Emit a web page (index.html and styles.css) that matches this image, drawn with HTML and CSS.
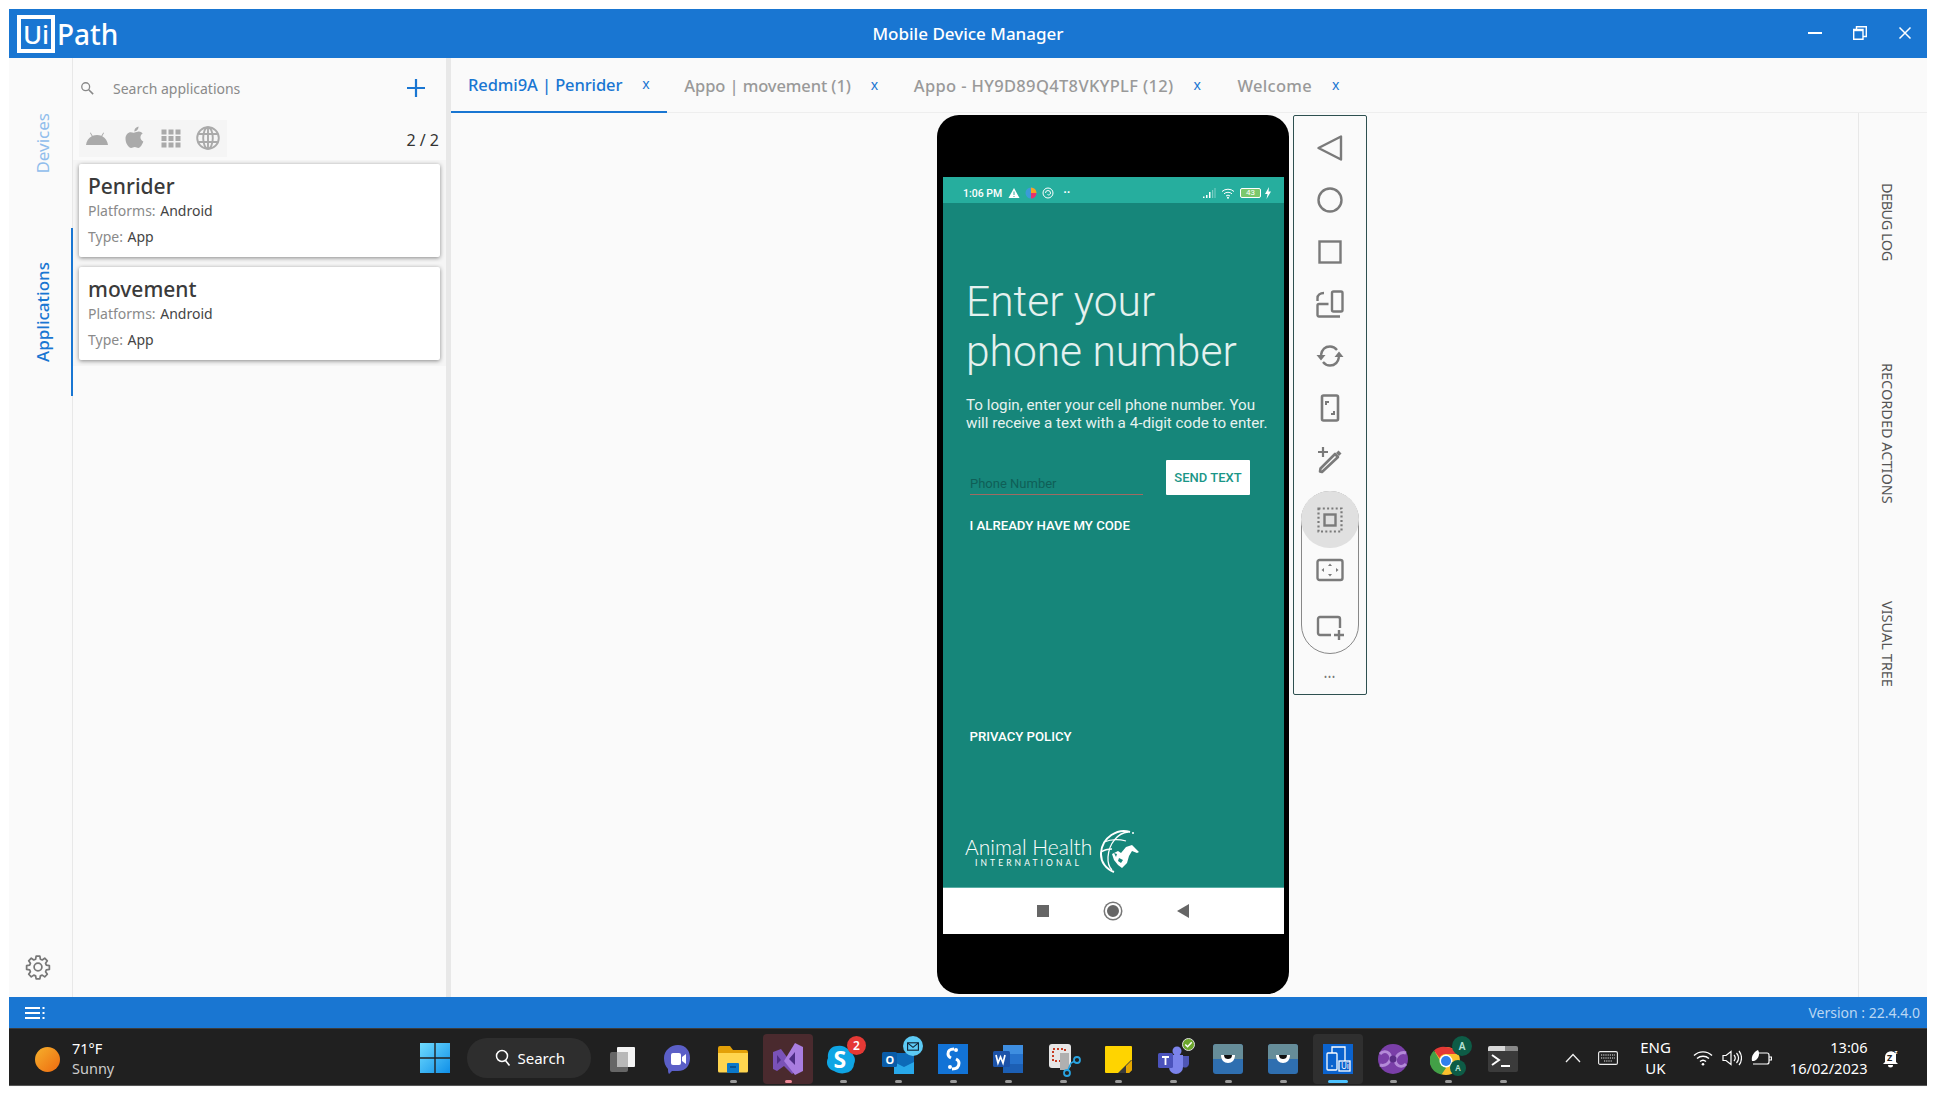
FILE: index.html
```html
<!DOCTYPE html>
<html>
  <head>
    <title>Mobile Device Manager</title>
    <link rel="stylesheet" href="styles.css">
  </head>
  <body>
    <div class="window">
      <header class="titlebar">
        <div class="logo"><span class="logo-box">Ui</span><span class="logo-path">Path</span></div>
        <div class="title">Mobile Device Manager</div>
        <div class="win-controls">
          <svg viewBox="0 0 14 14" class="win-btn"><path d="M0 7h14" stroke="#fff" stroke-width="2"/></svg>
          <svg viewBox="0 0 14 14" class="win-btn"><path d="M3.5 3V.7h9.800v9.800H10M.7 3.500h9.300v9.800H.7z" fill="none" stroke="#fff" stroke-width="1.400"/><path d="M.7 4.500h9.300" stroke="#fff" stroke-width="1.400"/></svg>
          <svg viewBox="0 0 14 14" class="win-btn"><path d="M1.500 1.500l11 11M12.500 1.500l-11 11" stroke="#fff" stroke-width="1.500"/></svg>
        </div>
      </header>

      <div class="content">
        <nav class="sidenav">
          <div class="nav-item nav-devices"><span class="vtext">Devices</span></div>
          <div class="nav-item nav-apps"><span class="vtext">Applications</span></div>
          <svg class="gear" viewBox="0 0 24 24"><path d="M10.300 2h3.400l.5 2.800 1.700.7 2.300-1.600 2.400 2.400-1.600 2.300.7 1.700 2.800.5v3.400l-2.800.5-.7 1.700 1.600 2.300-2.400 2.400-2.300-1.600-1.700.7-.5 2.800h-3.400l-.5-2.800-1.700-.7-2.300 1.600-2.400-2.400 1.600-2.300-.7-1.700-2.800-.5v-3.400l2.800-.5.700-1.700-1.600-2.300 2.400-2.400 2.300 1.600 1.700-.7z" fill="none" stroke="#777" stroke-width="1.600" stroke-linejoin="round"/><circle cx="12" cy="12" r="3.600" fill="none" stroke="#777" stroke-width="1.600"/></svg>
        </nav>

        <aside class="panel">
          <div class="search-row">
            <svg class="search-icon" viewBox="0 0 16 16"><circle cx="6.500" cy="6.500" r="4.500" fill="none" stroke="#888" stroke-width="1.500"/><path d="M10 10l5 5" stroke="#888" stroke-width="1.800"/></svg>
            <span class="search-text">Search applications</span>
            <svg class="plus" viewBox="0 0 18 18"><path d="M9 0v18M0 9h18" stroke="#1976d2" stroke-width="2.200"/></svg>
          </div>
          <div class="filter-row">
            <div class="filters">
              <svg viewBox="0 0 24 24" class="filter"><path d="M1 19c.4-4.200 2.600-7.200 5.800-8.800L5 7l.7-.4 1.900 3.200A12 12 0 0 1 16.400 9.800L18.300 6.600l.7.4-1.800 3.200c3.200 1.600 5.400 4.600 5.800 8.800z" fill="#aaa"/></svg>
              <svg viewBox="0 0 24 24" class="filter"><path d="M12.500 6.500c1.300 0 2.700-1 4.300-1 1.500 0 3 .8 3.900 2.100-3.300 1.900-2.800 6.500.6 7.900-.8 2.400-2.900 6.500-5 6.500-1.300 0-2-.9-3.500-.9s-2.400.9-3.600.9C6.300 22 3.500 16.800 3.500 12.800c0-4.100 2.600-6.500 5.200-6.500 1.500 0 2.800.9 3.800.2zM12.300 5.500C12.200 3.200 14 1 16.500.5c.2 2.500-1.700 4.800-4.200 5z" fill="#aaa"/></svg>
              <svg viewBox="0 0 24 24" class="filter"><path d="M2.500 3.500h5v5h-5zM9.500 3.500h5v5h-5zM16.500 3.500h5v5h-5zM2.500 10h5v5h-5zM9.500 10h5v5h-5zM16.500 10h5v5h-5zM2.500 16.500h5v5h-5zM9.500 16.500h5v5h-5zM16.500 16.500h5v5h-5z" fill="#aaa"/></svg>
              <svg viewBox="0 0 24 24" class="filter"><g fill="none" stroke="#aaa" stroke-width="1.900"><circle cx="12" cy="12" r="10.800"/><ellipse cx="12" cy="12" rx="4.800" ry="10.800"/><path d="M12 1v22M2.200 8h19.600M2.200 16h19.600"/></g></svg>
            </div>
            <span class="count">2 / 2</span>
          </div>
          <div class="app-row">
            <div class="app-card">
              <div class="app-name">Penrider</div>
              <div class="app-meta"><span class="meta-key">Platforms:</span> Android</div>
              <div class="app-meta"><span class="meta-key">Type:</span> App</div>
            </div>
          </div>
          <div class="app-row">
            <div class="app-card">
              <div class="app-name">movement</div>
              <div class="app-meta"><span class="meta-key">Platforms:</span> Android</div>
              <div class="app-meta"><span class="meta-key">Type:</span> App</div>
            </div>
          </div>
        </aside>

        <main class="main">
          <div class="tabs">
            <div class="tab active"><span class="tab-label">Redmi9A | Penrider</span><span class="tab-close">x</span></div>
            <div class="tab tab-movement"><span class="tab-label">Appo | movement (1)</span><span class="tab-close">x</span></div>
            <div class="tab tab-serial"><span class="tab-label">Appo - HY9D89Q4T8VKYPLF (12)</span><span class="tab-close">x</span></div>
            <div class="tab tab-welcome"><span class="tab-label">Welcome</span><span class="tab-close">x</span></div>
          </div>
          <div class="workspace">
            <div class="stage">
              <div class="phone">
                <div class="screen">
                  <div class="statusbar">
                    <span class="clock">1:06 PM</span>
                    <svg viewBox="0 0 12 12" class="st-icon"><path d="M6 1l5.500 10H.5z" fill="#fff"/><path d="M6 4.500v3.500M6 9v1" stroke="#26ae9e"/></svg>
                    <svg viewBox="0 0 12 12" class="st-icon"><circle cx="6" cy="6" r="5.500" fill="#3b9bd8"/><path d="M6 .5A5.500 5.500 0 0 1 11.500 6H6z" fill="#f5a623"/><path d="M11.500 6A5.500 5.500 0 0 1 6 11.500V6z" fill="#e8336d"/></svg>
                    <svg viewBox="0 0 12 12" class="st-icon"><circle cx="6" cy="6" r="5" fill="none" stroke="#fff"/><path d="M3.500 6a2.500 2.500 0 0 1 5 0c0 1.800-2 2.500-3 1.500" fill="none" stroke="#fff"/></svg>
                    <span class="st-dots">··</span>
                    <span class="st-spacer"></span>
                    <svg viewBox="0 0 14 12" class="st-signal"><path d="M1 11h1.500V9.500H1zM4 11h1.500V8H4zM7 11h1.500V5H7z" fill="#fff"/><path d="M10 11h1.200V3H10zM12.500 11h1V1h-1z" fill="#fff" opacity=".4"/></svg>
                    <svg viewBox="0 0 14 12" class="st-signal"><g fill="none" stroke="#fff"><path d="M1 4.500a9 9 0 0 1 12 0M3 6.800a6 6 0 0 1 8 0M5 9a3 3 0 0 1 4 0"/></g><circle cx="7" cy="10.800" r="1" fill="#fff"/></svg>
                    <span class="battery">43</span>
                    <svg viewBox="0 0 6 12" class="st-bolt"><path d="M4 0L0 7h2.500L1.500 12 6 4.500H3.500z" fill="#fff"/></svg>
                  </div>
                  <div class="app-body">
                    <h1 class="headline">Enter your<br>phone number</h1>
                    <p class="intro">To login, enter your cell phone number. You<br>will receive a text with a 4-digit code to enter.</p>
                    <div class="phone-form">
                      <div class="phone-input">Phone Number</div>
                      <div class="send-btn">SEND TEXT</div>
                    </div>
                    <div class="link-code">I ALREADY HAVE MY CODE</div>
                    <div class="link-privacy">PRIVACY POLICY</div>
                    <div class="brand">
                      <div class="brand-text">
                        <div class="brand-name">Animal Health</div>
                        <div class="brand-sub">INTERNATIONAL</div>
                      </div>
                      <svg viewBox="0 0 42 44" class="brand-globe">
                        <g fill="none" stroke="#fff" stroke-width="1.300">
                          <path d="M32 3C20 -1 4 8 3 24c-.500 9 5 16 13 19" stroke-width="2"/>
                          <path d="M30 3C20 4 11 14 10 28c-.3 5 1 10 4 13"/>
                          <path d="M6 13c7-3 15-3 22-1M3 23c3-2 7-3 11-3"/>
                        </g>
                        <path d="M14 25l6-3 3 2 5-6 6-2 2 2 5 5-2 1-5-2-3 5-2 7-5 5-4-3-4-5z" fill="#fff"/>
                        <path d="M21 29l4 2-2 3-3-2zM16 24l3 1-1 3z" fill="#16867a"/>
                        <circle cx="35" cy="4" r="1" fill="#fff"/>
                      </svg>
                    </div>
                  </div>
                  <div class="android-nav">
                    <span class="nav-square"></span>
                    <span class="nav-circle"></span>
                    <svg viewBox="0 0 12 14" class="nav-back"><path d="M12 0v14L0 7z" fill="#666"/></svg>
                  </div>
                </div>
              </div>

              <div class="toolbar">
                <div class="tool"><svg viewBox="0 0 28 28"><path d="M2.500 14L25 2.500v23z" fill="none" stroke="#7a7a7a" stroke-width="2.400" stroke-linejoin="round"/></svg></div>
                <div class="tool"><svg viewBox="0 0 28 28"><circle cx="14" cy="14" r="11.500" fill="none" stroke="#7a7a7a" stroke-width="2.400"/></svg></div>
                <div class="tool"><svg viewBox="0 0 28 28"><rect x="3.500" y="3.500" width="21" height="21" fill="none" stroke="#7a7a7a" stroke-width="2.400"/></svg></div>
                <div class="tool"><svg viewBox="0 0 28 28"><g fill="none" stroke="#7a7a7a" stroke-width="2.400" stroke-linejoin="round"><rect x="16" y="1.500" width="10.500" height="20" rx="1.500"/><path d="M12.500 14H3a1.500 1.500 0 0 0-1.500 1.500V25A1.500 1.500 0 0 0 3 26.500h21M1.500 11V8C1.500 5 4 3 8 3"/></g></svg></div>
                <div class="tool"><svg viewBox="0 0 28 28"><path d="M5 13C6 7 10 4.500 14 4.500c3 0 5 1 7 3.500M23 15c-1 6-5 8.500-9 8.500-3 0-5-1-7-3.500" fill="none" stroke="#7a7a7a" stroke-width="2.400"/><path d="M.5 13h9L5 18.500zM27.500 15h-9L23 9.500z" fill="#7a7a7a"/></svg></div>
                <div class="tool"><svg viewBox="0 0 28 28"><g fill="none" stroke="#7a7a7a" stroke-width="2.600"><rect x="6" y="1.500" width="16" height="25" rx="1.500"/><path d="M13 8h-3v3M15 20h3v-3" stroke-width="2"/></g></svg></div>
                <div class="tool"><svg viewBox="0 0 28 28"><g fill="none" stroke="#7a7a7a" stroke-width="2.600" stroke-linejoin="round"><path d="M6 26l-2-.5.500-3L19 8l3 3z"/><path d="M7 1v10M2 6h10" stroke-width="2.200"/></g><path d="M20 7l2.500-2.500 3 3L23 10z" fill="#7a7a7a"/></svg></div>
                <div class="tool-pill">
                  <div class="pill-item selected"><svg viewBox="0 0 28 28"><g fill="none" stroke="#7a7a7a"><rect x="2.500" y="2.500" width="23" height="23" stroke-width="2.200" stroke-dasharray="2 2.300"/><rect x="8.500" y="8.500" width="11" height="11" stroke-width="2.400"/></g></svg></div>
                  <div class="pill-item item-region"><svg viewBox="0 0 28 28"><rect x="1.500" y="4" width="25" height="20" rx="2" fill="none" stroke="#7a7a7a" stroke-width="2.400"/><path d="M14 7.500l2 2.500h-4zM14 20.500l-2-2.500h4zM5.500 14l2.500-2v4zM22.500 14l-2.500 2v-4z" fill="#7a7a7a"/></svg></div>
                  <div class="pill-item"><svg viewBox="0 0 28 28"><g fill="none" stroke="#7a7a7a" stroke-width="2.400"><path d="M15 22H4a2 2 0 0 1-2-2V6a2 2 0 0 1 2-2h18a2 2 0 0 1 2 2v9"/><path d="M23 17v10M18 22h10"/></g></svg></div>
                </div>
                <div class="tool-more">•••</div>
              </div>
            </div>
            <aside class="rail">
              <span class="rail-label label-debug">DEBUG LOG</span>
              <span class="rail-label label-recorded">RECORDED ACTIONS</span>
              <span class="rail-label label-tree">VISUAL TREE</span>
            </aside>
          </div>
        </main>
      </div>

      <footer class="app-status">
        <svg viewBox="0 0 20 14" class="status-menu"><path d="M0 2h15M0 7h15M0 12h15" stroke="#fff" stroke-width="2"/><path d="M17.500 1h2v2h-2zM17.500 6h2v2h-2zM17.500 11h2v2h-2z" fill="#fff"/></svg>
        <span class="version">Version : 22.4.4.0</span>
      </footer>

      <div class="taskbar">
        <div class="weather">
          <span class="sun"></span>
          <div class="weather-text"><div>71°F</div><div class="weather-sub">Sunny</div></div>
        </div>
        <svg viewBox="0 0 30 30" class="start">
          <defs><linearGradient id="winblue" x1="0" y1="0" x2="1" y2="1"><stop offset="0" stop-color="#6fdcff"/><stop offset="1" stop-color="#0f8fe8"/></linearGradient></defs>
          <path d="M0 0h14.300v14.300H0zM15.700 0H30v14.300H15.700zM0 15.700h14.300V30H0zM15.700 15.700H30V30H15.700z" fill="url(#winblue)"/>
        </svg>
        <div class="task-search">
          <svg viewBox="0 0 16 18" class="task-search-icon"><circle cx="7" cy="7" r="5.500" fill="none" stroke="#fff" stroke-width="1.500"/><path d="M10.500 11.500l4 5" stroke="#fff" stroke-width="1.600"/></svg>
          <span>Search</span>
        </div>

        <div class="tile"><svg viewBox="0 0 36 36" class="tile-icon"><rect x="5" y="11" width="18" height="20" rx="2" fill="#666"/><rect x="12" y="6" width="18" height="20" rx="1" fill="#f4f4f4"/><rect x="12" y="11" width="11" height="15" fill="#b8b8b8"/></svg><span class="dot hidden"></span></div>
        <div class="tile"><svg viewBox="0 0 36 36" class="tile-icon"><path d="M18 4c8 0 12 6 12 13s-4 13-12 13h-6l-3 3c-.8-1-1-3-1-5-3-3-4-7-4-11C4 10 10 4 18 4z" fill="#5b5fc7"/><rect x="11" y="12" width="10" height="12" rx="2" fill="#fff"/><path d="M22 16l4-3v10l-4-3z" fill="#fff"/></svg><span class="dot hidden"></span></div>
        <div class="tile"><svg viewBox="0 0 36 36" class="tile-icon"><path d="M3 7a2 2 0 0 1 2-2h10l3 4h13a2 2 0 0 1 2 2v5H3z" fill="#e3a008"/><path d="M3 12h30v18a1.500 1.500 0 0 1-1.500 1.500h-27A1.500 1.500 0 0 1 3 30z" fill="#ffd54f"/><rect x="12" y="22" width="12" height="10" rx="1" fill="#0b78c9"/><path d="M15 26h6" stroke="#07457a" stroke-width="1.400"/></svg><span class="dot"></span></div>
        <div class="tile tile-vs"><svg viewBox="0 0 36 36" class="tile-icon"><path d="M3 11l8-3 16 22-5 3-8-8-7 5-4-2z" fill="#7a52b8"/><path d="M25 2l8 4v24l-8 4-11-14z" fill="#a97de0"/><path d="M25 11l-6 7 6 6z" fill="#4e2d85"/><path d="M7 14v9l4-4z" fill="#4e2d85"/></svg><span class="dot dot-pink"></span></div>
        <div class="tile"><div class="badge-wrap"><svg viewBox="0 0 36 36" class="tile-icon"><path d="M12 5a12 12 0 0 1 13 6 9 9 0 0 1 4 12 9 9 0 0 1-9 9c-3 1-8 0-11-2a9 9 0 0 1-6-13C2 11 6 5 12 5z" fill="#0fa5e4"/><text x="8.500" y="27" class="skype-s">S</text></svg><span class="badge-red">2</span></div><span class="dot"></span></div>
        <div class="tile"><div class="badge-wrap"><svg viewBox="0 0 36 36" class="tile-icon"><path d="M14 12h20v20H14z" fill="#0d6ab8"/><path d="M14 21l10 5 10-5v12H14z" fill="#28a8ea"/><rect x="2" y="11" width="15" height="15" rx="1.500" fill="#0a5ca8"/><text x="5.500" y="23" class="outlook-o">O</text></svg><span class="badge-mail"><svg viewBox="0 0 14 10"><rect x=".7" y=".7" width="12.600" height="8.600" fill="none" stroke="#123" stroke-width="1.300"/><path d="M1 1l6 5 6-5" fill="none" stroke="#123" stroke-width="1.300"/></svg></span></div><span class="dot"></span></div>
        <div class="tile"><svg viewBox="0 0 36 36" class="tile-icon"><rect x="3" y="3" width="30" height="30" fill="#1273d6"/><path d="M19 8c-5 0-6 2-6 5 0 2 1 3 3 4M17 28c5 0 7-2 7-6 0-2-1-3-3-4" fill="none" stroke="#fff" stroke-width="3"/><circle cx="21" cy="9" r="2" fill="#fff"/><circle cx="15" cy="26" r="2" fill="#fff"/></svg><span class="dot"></span></div>
        <div class="tile"><svg viewBox="0 0 36 36" class="tile-icon"><path d="M13 4h20v28H13z" fill="#1c5fb4"/><path d="M13 4h20v9H13z" fill="#3e8ee0"/><path d="M13 13h20v10H13z" fill="#2672cc"/><rect x="3" y="10" width="17" height="16" rx="1.500" fill="#1c52a8"/><path d="M6 14l2 8 2.500-6 2.500 6 2-8" fill="none" stroke="#fff" stroke-width="1.700"/></svg><span class="dot"></span></div>
        <div class="tile"><svg viewBox="0 0 36 36" class="tile-icon"><rect x="4" y="3" width="22" height="24" rx="3" fill="#e6e6e6"/><rect x="8" y="8" width="12" height="12" fill="none" stroke="#c63b22" stroke-width="2" stroke-dasharray="2 2"/><path d="M15 12h9v17H15z" fill="#b0b0b0"/><circle cx="22" cy="32" r="3" fill="none" stroke="#29a3e0" stroke-width="1.800"/><circle cx="32" cy="19" r="3" fill="none" stroke="#29a3e0" stroke-width="1.800"/><path d="M23 29l3-7 4-2" fill="none" stroke="#29a3e0" stroke-width="1.600"/></svg><span class="dot"></span></div>
        <div class="tile"><svg viewBox="0 0 36 36" class="tile-icon"><path d="M6 5h25a1 1 0 0 1 1 1v23l-3 3H6a1 1 0 0 1-1-1V6a1 1 0 0 1 1-1z" fill="#ffd400"/><path d="M18 32l13-13h1v10l-3 3z" fill="#3a3a3a"/><path d="M26 25l6-6v10l-3 3h-3z" fill="#e6a700"/></svg><span class="dot"></span></div>
        <div class="tile"><div class="badge-wrap"><svg viewBox="0 0 36 36" class="tile-icon"><circle cx="22" cy="10" r="4.500" fill="#7b83eb"/><path d="M14 14h14v12a7 7 0 0 1-14 0z" fill="#7b83eb"/><path d="M28 15h6v8a4 4 0 0 1-6 3z" fill="#4f56b5"/><rect x="3" y="12" width="15" height="15" rx="1.500" fill="#4b53bc"/><path d="M7 16h7M10.500 16v8" stroke="#fff" stroke-width="1.800"/></svg><span class="badge-check"><svg viewBox="0 0 12 12"><path d="M2.500 6l2.500 2.500 4.500-5" fill="none" stroke="#fff" stroke-width="1.600"/></svg></span></div><span class="dot"></span></div>
        <div class="tile"><svg viewBox="0 0 36 36" class="tile-icon"><rect x="3" y="3" width="30" height="30" rx="3" fill="#2f6fb0"/><path d="M3 6a3 3 0 0 1 3-3h24a3 3 0 0 1 3 3v12H3z" fill="#668d99"/><path d="M11 14h14c0 5-3 8-7 8s-7-3-7-8z" fill="#fff"/><path d="M14 14h8c0 3-2 4-4 4s-4-1-4-4z" fill="#111"/></svg><span class="dot"></span></div>
        <div class="tile"><svg viewBox="0 0 36 36" class="tile-icon"><rect x="3" y="3" width="30" height="30" rx="3" fill="#2f6fb0"/><path d="M3 6a3 3 0 0 1 3-3h24a3 3 0 0 1 3 3v12H3z" fill="#668d99"/><path d="M11 14h14c0 5-3 8-7 8s-7-3-7-8z" fill="#fff"/><path d="M14 14h8c0 3-2 4-4 4s-4-1-4-4z" fill="#111"/></svg><span class="dot"></span></div>
        <div class="tile tile-open"><svg viewBox="0 0 36 36" class="tile-icon"><rect x="3" y="3" width="30" height="30" fill="#0b63ce"/><g fill="none" stroke="#fff" stroke-width="1.300"><rect x="7" y="12" width="10" height="17" rx="1"/><path d="M12 12V6h13v14"/><rect x="19" y="20" width="11" height="10"/></g><circle cx="12" cy="25" r=".8" fill="#fff"/><text x="21" y="28" class="tile-ui">Ui</text></svg><span class="dot dot-open"></span></div>
        <div class="tile"><svg viewBox="0 0 36 36" class="tile-icon"><circle cx="18" cy="18" r="15" fill="#7a3fa8"/><path d="M5 13c6-6 14 1 9 8-2 3-6 4-9 3M31 23c-6 6-14-1-9-8 2-3 6-4 9-3" fill="none" stroke="#b48ad8" stroke-width="3"/><circle cx="18" cy="18" r="3.500" fill="#5a2d86"/></svg><span class="dot"></span></div>
        <div class="tile"><div class="badge-wrap"><svg viewBox="0 0 36 36" class="tile-icon"><circle cx="16" cy="20" r="14" fill="#fbc02d"/><path d="M16 6a14 14 0 0 1 12 7H16a7 7 0 0 0-6.500 4L4 9.500A14 14 0 0 1 16 6z" fill="#e53935"/><path d="M4 9.500l6 10 6 7.500-4.500 6.500A14 14 0 0 1 4 9.500z" fill="#43a047"/><circle cx="16" cy="20" r="6.500" fill="#fff"/><circle cx="16" cy="20" r="5" fill="#2f80ed"/></svg><span class="badge-a top">A</span><span class="badge-a low">A</span></div><span class="dot"></span></div>
        <div class="tile"><svg viewBox="0 0 36 36" class="tile-icon"><rect x="3" y="5" width="30" height="26" rx="2" fill="#3b3b3b"/><path d="M3 7a2 2 0 0 1 2-2h15v5H3z" fill="#d8d8d8"/><path d="M20 5h11a2 2 0 0 1 2 2v3H20z" fill="#888"/><path d="M7 14l7 5-7 5" fill="none" stroke="#fff" stroke-width="2"/><path d="M16 25h9" stroke="#fff" stroke-width="2"/></svg><span class="dot"></span></div>

        <div class="tray">
          <svg viewBox="0 0 16 10" class="tray-chevron"><path d="M1 9l7-7.500L15 9" fill="none" stroke="#eee" stroke-width="1.300"/></svg>
          <svg viewBox="0 0 20 14" class="tray-kbd"><rect x=".6" y=".6" width="18.800" height="12.800" rx="1.500" fill="none" stroke="#eee" stroke-width="1.100"/><path d="M3 4h14M3 7h14M6 10h8" stroke="#eee" stroke-width="1.200" stroke-dasharray="1.200 1"/></svg>
          <div class="tray-lang">ENG<br>UK</div>
          <svg viewBox="0 0 20 16" class="tray-wifi"><g fill="none" stroke="#fff" stroke-width="1.400"><path d="M1 5.500a13 13 0 0 1 18 0M4 8.500a9 9 0 0 1 12 0M7 11.500a4.500 4.500 0 0 1 6 0"/></g><circle cx="10" cy="14.300" r="1.300" fill="#fff"/></svg>
          <svg viewBox="0 0 20 16" class="tray-vol"><g fill="none" stroke="#fff" stroke-width="1.200"><path d="M1 5.500h3L9 1.500v13L4 10.500H1zM12 5c1.500 1.800 1.500 4.200 0 6M14.500 3c2.500 3 2.500 7 0 10M17 1c3.300 4 3.300 10 0 14"/></g></svg>
          <svg viewBox="0 0 22 18" class="tray-batt"><path d="M6 4h11a2 2 0 0 1 2 2v7a2 2 0 0 1-2 2H3M19.500 8h2v3h-2" fill="none" stroke="#fff" stroke-width="1.200"/><path d="M2 12C1 7 4 3 8 1c2 3 1 8-2 10-1 1-3 1-4 1zM3 15l3-6" fill="#fff"/></svg>
          <div class="tray-clock">13:06<br>16/02/2023</div>
          <svg viewBox="0 0 18 20" class="tray-bell"><path d="M3 14V9a6 6 0 0 1 11-3v8l2 2H1z" fill="#fff"/><path d="M6 17h5a2.500 2.500 0 0 1-5 0z" fill="#fff"/><text x="5" y="12.500" class="bell-z">Z</text><text x="12.500" y="6" class="bell-z small">z</text></svg>
        </div>
      </div>
    </div>
  </body>
</html>
```

FILE: styles.css
```css
* {
  box-sizing: border-box;
}

body {
  margin: 0;
  padding: 9px 9px 0 9px;
  height: 1096px;
  overflow: hidden;
  background-color: #fff;
  font-family: "Noto Sans", "Open Sans", sans-serif;
  color: #333;
}

.window {
  display: flex;
  flex-direction: column;
  width: 1918px;
  height: 1078px;
  background-color: #fafafa;
}

/* title bar */
.titlebar {
  display: grid;
  grid-template-columns: 1fr auto 1fr;
  align-items: center;
  height: 49px;
  background-color: #1976d2;
  color: #fff;
  flex-shrink: 0;
}

.logo {
  display: flex;
  align-items: center;
  padding-left: 8px;
}

.logo-box {
  display: flex;
  align-items: center;
  justify-content: center;
  width: 38px;
  height: 38px;
  border: 4px solid #fff;
  font-size: 26px;
  font-weight: 500;
  line-height: 1;
}

.logo-path {
  margin-left: 2px;
  font-size: 28px;
  font-weight: 500;
  line-height: 1;
}

.title {
  font-size: 17px;
  font-weight: 500;
}

.win-controls {
  display: flex;
  justify-content: flex-end;
  align-items: center;
  gap: 31px;
  padding-right: 15px;
  margin-top: -2px;
}

.win-btn {
  width: 14px;
  height: 14px;
}

/* main area */
.content {
  display: flex;
  height: 939px;
  flex-shrink: 0;
}

.sidenav {
  position: relative;
  width: 64px;
  flex-shrink: 0;
  border-right: 1px solid #e8e8e8;
}

.nav-item {
  display: flex;
  justify-content: center;
  padding-left: 4px;
  font-size: 17px;
}

.vtext {
  writing-mode: vertical-rl;
  transform: rotate(180deg);
}

.nav-devices {
  align-items: flex-start;
  height: 170px;
  padding-top: 55px;
  color: #90bdec;
}

.nav-apps {
  align-items: center;
  height: 168px;
  margin-right: -1px;
  border-right: 2px solid #1976d2;
  color: #1976d2;
  font-weight: 500;
}

.gear {
  position: absolute;
  left: 16px;
  bottom: 17px;
  width: 26px;
  height: 26px;
}

.panel {
  width: 378px;
  flex-shrink: 0;
  border-right: 5px solid #e8e8e8;
}

.search-row {
  display: flex;
  align-items: center;
  height: 62px;
  padding: 0 21px 2px 7px;
}

.search-icon {
  width: 14px;
  height: 14px;
}

.search-text {
  margin-left: 19px;
  flex: 1;
  font-size: 14px;
  color: #8a8a8a;
}

.plus {
  width: 18px;
  height: 18px;
}

.filter-row {
  display: flex;
  justify-content: space-between;
  padding: 0 7px 0 6px;
  height: 40px;
}

.filters {
  display: flex;
  align-items: center;
  height: 37px;
  padding-bottom: 2px;
  background-color: #f5f5f5;
}

.filter {
  width: 24px;
  height: 24px;
  margin: 0 7.500px 0 5.500px;
}

.count {
  padding-top: 9px;
  font-size: 16px;
}

.app-row {
  padding: 4px 6px 6px;
  background-color: #f5f5f5;
}

.app-card {
  height: 93px;
  padding: 9px 9px 0;
  background-color: #fff;
  border-radius: 2px;
  box-shadow: 0 1px 4px rgba(0, 0, 0, 0.45);
}

.app-name {
  height: 25px;
  font-size: 21px;
  font-weight: 500;
  line-height: 26px;
  color: #3a3a3a;
}

.app-meta {
  height: 26px;
  font-size: 14px;
  line-height: 26px;
  color: #444;
}

.meta-key {
  margin-right: 1px;
  color: #8a8a8a;
}

/* tabs */
.main {
  display: flex;
  flex-direction: column;
  flex: 1;
  min-width: 0;
}

.tabs {
  display: flex;
  height: 55px;
  border-bottom: 1px solid #eee;
  flex-shrink: 0;
}

.tab {
  display: flex;
  align-items: center;
  gap: 20px;
  height: 55px;
  padding: 0 15px 0 20px;
  font-size: 16.500px;
  font-weight: 500;
  letter-spacing: -0.100px;
  color: #999;
}

.tab:first-child {
  padding: 0 17px;
}

.tab-movement {
  padding-left: 17px;
}

.tab-serial {
  letter-spacing: 0.350px;
}

.tab-welcome {
  padding-left: 21px;
  letter-spacing: 0.300px;
}

.tab.active {
  border-bottom: 2px solid #1976d2;
  color: #1976d2;
}

.tab-close {
  width: 8px;
  margin-top: -3px;
  font-size: 14px;
  font-weight: 400;
  letter-spacing: 0;
  color: #1976d2;
}

.workspace {
  display: flex;
  flex: 1;
  min-height: 0;
}

.stage {
  display: flex;
  align-items: flex-start;
  gap: 4px;
  flex: 1;
  padding: 2px 0 0 486px;
}

/* phone */
.phone {
  width: 352px;
  height: 879px;
  padding: 62px 5px 60px 6px;
  background-color: #000;
  border-radius: 22px;
  font-family: Roboto, sans-serif;
}

.screen {
  display: flex;
  flex-direction: column;
  height: 757px;
}

.statusbar {
  display: flex;
  align-items: center;
  height: 26px;
  padding: 6px 13px 0 20px;
  background-color: #26ae9e;
  color: #fff;
  flex-shrink: 0;
}

.clock {
  margin-right: 6px;
  font-size: 10.500px;
  font-weight: 500;
}

.st-icon {
  width: 12px;
  height: 12px;
  margin-right: 5px;
}

.st-dots {
  margin-left: 4px;
  font-size: 12px;
  font-weight: 700;
}

.st-spacer {
  flex: 1;
}

.st-signal {
  width: 14px;
  height: 12px;
  margin-right: 5px;
}

.battery {
  width: 21px;
  height: 10px;
  margin-right: 4px;
  background-color: #7bc86c;
  border: 1px solid #fff;
  border-radius: 2px;
  font-size: 8px;
  line-height: 8px;
  text-align: center;
}

.st-bolt {
  width: 6px;
  height: 12px;
}

.app-body {
  display: flex;
  flex-direction: column;
  height: 685px;
  padding: 74px 0 0 23px;
  background-color: #16867a;
  border-bottom: 1px solid #5aaea5;
  color: #fff;
  flex-shrink: 0;
}

.headline {
  margin: 0;
  font-size: 42.500px;
  font-weight: 300;
  line-height: 50px;
  color: #e4f1ef;
}

.intro {
  margin: 19px 0 0;
  font-size: 15.200px;
  line-height: 18px;
  color: #e6f2f0;
}

.phone-form {
  display: flex;
  align-items: flex-start;
  gap: 23px;
  margin: 28px 0 0 4px;
}

.phone-input {
  width: 173px;
  height: 35px;
  padding-top: 15px;
  border-bottom: 1px solid #a06a62;
  font-size: 13px;
  line-height: 17px;
  color: #0f5f57;
}

.send-btn {
  width: 84px;
  height: 35px;
  background-color: #fff;
  color: #1a9687;
  border-radius: 1px;
  font-size: 13px;
  font-weight: 500;
  line-height: 35px;
  text-align: center;
}

.link-code,
.link-privacy {
  margin-left: 3.500px;
  font-size: 13.200px;
  font-weight: 500;
  line-height: 16px;
}

.link-code {
  margin-top: 23px;
}

.link-privacy {
  margin-top: 195px;
}

.brand {
  display: flex;
  align-items: center;
  gap: 6px;
  margin: 84px 0 0 -1px;
}

.brand-text {
  font-family: Lato, sans-serif;
  color: #fff;
}

.brand-name {
  font-size: 21px;
  font-weight: 300;
  line-height: 24px;
}

.brand-sub {
  padding-left: 10px;
  font-size: 8.500px;
  line-height: 9px;
  letter-spacing: 3.100px;
}

.brand-globe {
  width: 42px;
  height: 44px;
}

.android-nav {
  display: flex;
  align-items: center;
  justify-content: center;
  gap: 56px;
  flex: 1;
  padding-right: 1px;
  background-color: #fff;
}

.nav-square {
  width: 12px;
  height: 12px;
  background-color: #666;
}

.nav-circle {
  width: 16px;
  height: 16px;
  background-color: #666;
  border: 2px solid #fff;
  border-radius: 50%;
  box-shadow: 0 0 0 1.500px #777;
}

.nav-back {
  width: 12px;
  height: 14px;
}

/* device toolbar */
.toolbar {
  display: flex;
  flex-direction: column;
  align-items: center;
  width: 74px;
  height: 580px;
  padding-top: 6px;
  border: 1px solid #2e5050;
  border-radius: 2px;
}

.tool {
  display: flex;
  align-items: center;
  justify-content: center;
  height: 52px;
  flex-shrink: 0;
}

.tool svg,
.pill-item svg {
  width: 28px;
  height: 28px;
}

.tool-pill {
  width: 58px;
  height: 163px;
  margin-top: 5px;
  border: 1px solid #888;
  border-radius: 29px;
  flex-shrink: 0;
}

.pill-item {
  display: flex;
  align-items: center;
  justify-content: center;
  height: 54px;
}

.pill-item.selected {
  height: 57px;
  margin: -1px -1px 0;
  background-color: #e0e0e0;
  border-radius: 29px;
}

.pill-item.item-region {
  height: 52px;
  padding-bottom: 8px;
}

.tool-more {
  margin-top: 17px;
  font-size: 8px;
  letter-spacing: 1px;
  color: #777;
}

/* right rail */
.rail {
  display: flex;
  flex-direction: column;
  align-items: center;
  width: 69px;
  padding: 70px 10px 0 0;
  border-left: 1px solid #e8e8e8;
  flex-shrink: 0;
}

.rail-label {
  writing-mode: vertical-rl;
  font-size: 14.500px;
  color: #555;
}

.label-debug {
  letter-spacing: -0.500px;
}

.label-recorded {
  margin-top: 102px;
}

.label-tree {
  margin-top: 98px;
}

/* bottom bars */
.app-status {
  display: flex;
  align-items: center;
  justify-content: space-between;
  height: 31px;
  padding: 0 7px 0 16px;
  background-color: #1976d2;
  flex-shrink: 0;
}

.status-menu {
  width: 20px;
  height: 14px;
}

.version {
  font-size: 14px;
  color: #b9d6f2;
}

.taskbar {
  display: flex;
  align-items: flex-start;
  height: 58px;
  padding-top: 5px;
  background-color: #202020;
  border-top: 1px solid #3c3c3c;
  border-bottom: 1px solid #555;
  color: #fff;
  flex-shrink: 0;
}

.weather {
  display: flex;
  align-items: center;
  gap: 12px;
  width: 411px;
  height: 50px;
  padding-left: 26px;
}

.sun {
  width: 25px;
  height: 25px;
  background: linear-gradient(135deg, #f6b12c, #ee6a10);
  border-radius: 50%;
}

.weather-text {
  font-size: 14.500px;
  line-height: 20px;
  margin-top: -2px;
}

.weather-sub {
  color: #ccc;
}

.start {
  width: 30px;
  height: 30px;
  margin-top: 9px;
}

.task-search {
  display: flex;
  align-items: center;
  gap: 7px;
  width: 124px;
  height: 40px;
  margin: 4px 5px 0 16.500px;
  padding-left: 28px;
  background-color: #2e2e2e;
  border-radius: 20px;
  font-size: 15px;
}

.task-search-icon {
  width: 16px;
  height: 18px;
}

.tile {
  display: flex;
  flex-direction: column;
  align-items: center;
  width: 50px;
  height: 50px;
  margin: 0 2.500px;
  padding-top: 7px;
  border-radius: 4px;
  flex-shrink: 0;
}

.tile-icon {
  display: block;
  width: 36px;
  height: 36px;
}

.tile-vs {
  background-color: #4a2a2e;
}

.tile-open {
  background-color: #2f2f2f;
}

.dot {
  width: 7px;
  height: 3px;
  margin-top: 3px;
  background-color: #9a9a9a;
  border-radius: 2px;
}

.dot.hidden {
  visibility: hidden;
}

.dot-pink {
  background-color: #f08a98;
}

.dot-open {
  width: 20px;
  background-color: #4cc2ff;
}

.badge-wrap {
  position: relative;
  width: 36px;
  height: 36px;
}

.badge-red {
  position: absolute;
  top: -5px;
  right: -5px;
  width: 19px;
  height: 19px;
  background-color: #e53935;
  border-radius: 50%;
  font-size: 12px;
  font-weight: 600;
  line-height: 19px;
  text-align: center;
}

.badge-mail {
  position: absolute;
  top: -5px;
  right: -7px;
  display: flex;
  align-items: center;
  justify-content: center;
  width: 20px;
  height: 20px;
  background-color: #5ccaf5;
  border-radius: 50%;
}

.badge-mail svg {
  width: 12px;
  height: 9px;
}

.badge-check {
  position: absolute;
  top: -3px;
  right: -4px;
  width: 13px;
  height: 13px;
  background-color: #6ca62c;
  border: 1px solid #ddd;
  border-radius: 50%;
}

.badge-check svg {
  display: block;
  width: 11px;
  height: 11px;
}

.badge-a {
  position: absolute;
  display: block;
  background-color: #0d5c46;
  border-radius: 50%;
  text-align: center;
  font-weight: 600;
  color: #b9e4d8;
}

.badge-a.top {
  top: -5px;
  right: -6px;
  width: 20px;
  height: 20px;
  font-size: 10px;
  line-height: 20px;
}

.badge-a.low {
  top: 19px;
  right: 0;
  width: 16px;
  height: 16px;
  font-size: 8px;
  line-height: 16px;
}

.skype-s {
  font-size: 23px;
  font-weight: 700;
  fill: #fff;
}

.outlook-o {
  font-size: 11px;
  font-weight: 700;
  fill: #fff;
}

.tile-ui {
  font-size: 8px;
  fill: #fff;
}

.tray {
  display: flex;
  align-items: center;
  height: 52px;
  margin-top: -2px;
  margin-left: 34px;
  font-size: 14.600px;
  line-height: 21px;
}

.tray-chevron {
  width: 16px;
  height: 10px;
}

.tray-kbd {
  width: 20px;
  height: 14px;
  margin-left: 17px;
}

.tray-lang {
  width: 40px;
  margin-left: 18px;
  font-size: 15px;
  text-align: center;
}

.tray-wifi {
  width: 20px;
  height: 16px;
  margin-left: 17px;
}

.tray-vol {
  width: 20px;
  height: 16px;
  margin-left: 9px;
}

.tray-batt {
  width: 22px;
  height: 18px;
  margin-left: 8px;
}

.tray-clock {
  width: 90px;
  margin-left: 6px;
  text-align: right;
}

.tray-bell {
  width: 18px;
  height: 20px;
  margin-left: 14px;
}

.bell-z {
  font-size: 9px;
  font-weight: 700;
  fill: #202020;
}

.bell-z.small {
  font-size: 6px;
  fill: #fff;
}
```
